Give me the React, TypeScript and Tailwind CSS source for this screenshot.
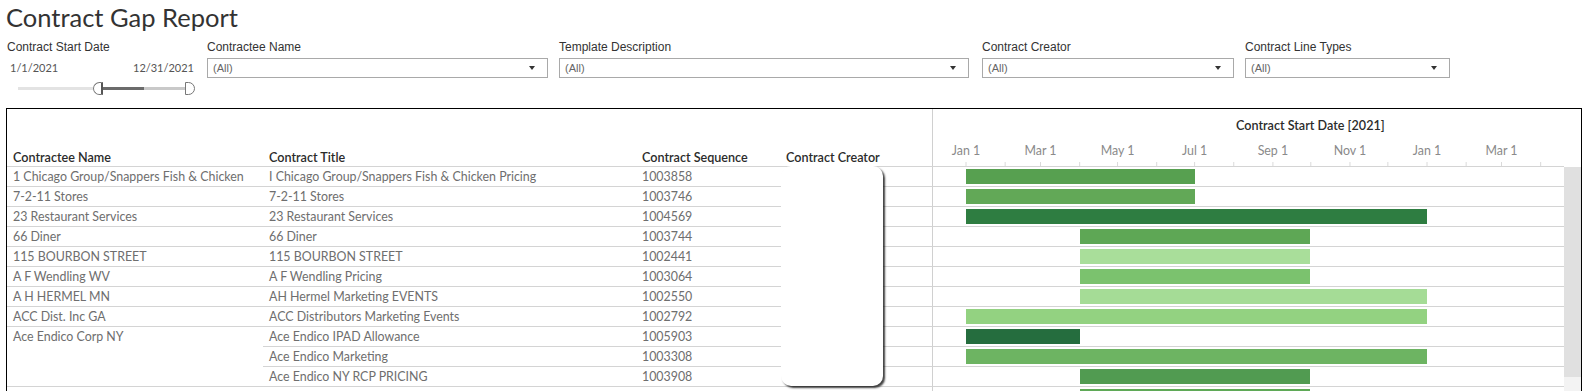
import React from "react";

// pixels per day on the gantt axis; Jan 1 2021 sits 33px in from the chart edge
const DAY = 461 / 365;
const JAN = 33;

type Row = {
  name: string;
  title: string;
  seq: string;
  from: number;
  to: number;
  color: string;
  merged?: boolean; // row continues the contractee cell of the row below
};

const rows: Row[] = [
  { name: "1 Chicago Group/Snappers Fish & Chicken", title: "I Chicago Group/Snappers Fish & Chicken Pricing", seq: "1003858", from: 0, to: 181, color: "#57a050" },
  { name: "7-2-11 Stores", title: "7-2-11 Stores", seq: "1003746", from: 0, to: 181, color: "#62a857" },
  { name: "23 Restaurant Services", title: "23 Restaurant Services", seq: "1004569", from: 0, to: 365, color: "#2e7d41" },
  { name: "66 Diner", title: "66 Diner", seq: "1003744", from: 90, to: 272, color: "#5ea755" },
  { name: "115 BOURBON STREET", title: "115 BOURBON STREET", seq: "1002441", from: 90, to: 272, color: "#a9de9a" },
  { name: "A F Wendling WV", title: "A F Wendling Pricing", seq: "1003064", from: 90, to: 272, color: "#7bc26e" },
  { name: "A H HERMEL MN", title: "AH Hermel Marketing EVENTS", seq: "1002550", from: 90, to: 365, color: "#a5dc96" },
  { name: "ACC Dist. Inc GA", title: "ACC Distributors Marketing Events", seq: "1002792", from: 0, to: 365, color: "#93d281" },
  { name: "Ace Endico Corp NY", title: "Ace Endico IPAD Allowance", seq: "1005903", from: 0, to: 90, color: "#256d3e", merged: true },
  { name: "", title: "Ace Endico Marketing", seq: "1003308", from: 0, to: 365, color: "#6db462", merged: true },
  { name: "", title: "Ace Endico NY RCP PRICING", seq: "1003908", from: 90, to: 272, color: "#519b51" },
  { name: "", title: "", seq: "", from: 90, to: 272, color: "#5fa957" },
];

const months = [0, 31, 59, 90, 120, 151, 181, 212, 243, 273, 304, 334, 365, 396, 424, 455];
const labels = [
  { d: 0, t: "Jan 1" },
  { d: 59, t: "Mar 1" },
  { d: 120, t: "May 1" },
  { d: 181, t: "Jul 1" },
  { d: 243, t: "Sep 1" },
  { d: 304, t: "Nov 1" },
  { d: 365, t: "Jan 1" },
  { d: 424, t: "Mar 1" },
];

function Filter({ label, className }: { label: string; className: string }) {
  return (
    <div className={className}>
      <div className="mt-[4px] text-[12px] leading-[14px] text-[#333]">{label}</div>
      <div className="mt-[4px] flex h-[20px] items-center justify-between border border-[#a9a9a9] pl-[5px] pr-[12px]">
        <span className="text-[11px] text-[#666]">(All)</span>
        <span className="h-0 w-0 border-x-[3.5px] border-t-[4px] border-x-transparent border-t-[#333]" />
      </div>
    </div>
  );
}

export default function App() {
  return (
    <div className="h-[391px] w-[1591px] overflow-hidden bg-white font-['Liberation_Sans',Arial,sans-serif]">
      {/* Title */}
      <div className="h-[36px] pl-[6px] pt-[2px] font-['Lato',sans-serif] text-[25.5px] leading-[30px] text-[#333]">
        Contract Gap Report
      </div>

      {/* Filters */}
      <div className="flex h-[72px] pl-[7px]">
        <div className="w-[200px]">
          <div className="mt-[4px] text-[12px] leading-[14px] text-[#333]">Contract Start Date</div>
          <div className="mt-[4px] flex h-[20px] items-center justify-between pl-[3px] pr-[13px] font-['Lato',sans-serif] text-[11px] text-[#555]">
            <span>1/1/2021</span>
            <span>12/31/2021</span>
          </div>
          <div className="mt-[4px] flex h-[13px] items-center pl-[11px]">
            <div className="h-[3px] w-[75px] bg-[#e3e3e3]" />
            <div className="h-[13px] w-[10px] rounded-l-full border border-r-2 border-[#777] border-r-[#555] bg-white" />
            <div className="h-[3px] w-[41px] bg-[#6b6b6b]" />
            <div className="h-[3px] w-[41px] bg-[#c9c9c9]" />
            <div className="h-[13px] w-[10px] rounded-r-full border border-[#777] bg-white" />
          </div>
        </div>
        <Filter label="Contractee Name" className="w-[341px]" />
        <Filter label="Template Description" className="ml-[11px] w-[410px]" />
        <Filter label="Contract Creator" className="ml-[13px] w-[252px]" />
        <Filter label="Contract Line Types" className="ml-[11px] w-[205px]" />
      </div>

      {/* Worksheet */}
      <div className="relative ml-[6px] flex w-[1576px] border border-black font-['Lato',sans-serif] text-[12.4px]">
        <div className="w-[1557px]">
          {/* header */}
          <div className="flex h-[58px] border-b border-[#d4d4d4] text-[12.6px] font-semibold text-[#2b2b2b]">
            <div className="flex w-[256px] items-end pl-[6px] leading-[16px]">Contractee Name</div>
            <div className="flex w-[373px] items-end pl-[6px] leading-[16px]">Contract Title</div>
            <div className="flex w-[144px] items-end pl-[6px] leading-[16px]">Contract Sequence</div>
            <div className="flex w-[152px] items-end pl-[6px] leading-[16px]">Contract Creator</div>
            <div className="relative w-[632px] border-l border-[#d0d0d0]">
              <div className="absolute left-[303px] top-[8px] whitespace-nowrap leading-[18px]">
                Contract Start Date [2021]
              </div>
              {labels.map((l, i) => (
                <div
                  key={i}
                  className="absolute top-[33px] -translate-x-1/2 whitespace-nowrap text-[12.4px] font-normal leading-[18px] text-[#8a8a8a]"
                  style={{ left: JAN + l.d * DAY }}
                >
                  {l.t}
                </div>
              ))}
              <svg className="absolute bottom-0 left-0" width="631" height="4">
                {months.map((d) => (
                  <line key={d} x1={JAN + d * DAY} x2={JAN + d * DAY} y1="0" y2="4" stroke="#dadada" strokeWidth="1" />
                ))}
              </svg>
            </div>
          </div>

          {/* rows */}
          {rows.map((r, i) => (
            <div key={i} className="flex h-[20px] leading-[19px] text-[#6e6e6e]">
              <div className={"w-[256px] whitespace-nowrap pl-[6px] " + (r.merged ? "" : "border-b border-[#d4d4d4]")}>
                {r.name}
              </div>
              <div className="flex border-b border-[#d4d4d4]">
                <div className="w-[373px] whitespace-nowrap pl-[6px]">{r.title}</div>
                <div className="w-[144px] pl-[6px]">{r.seq}</div>
                <div className="w-[152px]" />
              </div>
              <div className="relative w-[632px] border-b border-l border-[#d0d0d0] border-b-[#d4d4d4]">
                <div
                  className="absolute top-[2px] h-[15px]"
                  style={{ left: JAN + r.from * DAY, width: (r.to - r.from) * DAY, background: r.color }}
                />
              </div>
            </div>
          ))}
        </div>

        {/* scrollbar */}
        <div className="flex w-[17px] flex-col">
          <div className="h-[58px] bg-white" />
          <div className="h-[210px] bg-[#e0e0e0]" />
          <div className="flex-1 bg-[#f3f3f3]" />
        </div>

        {/* redacted creator names */}
        <div className="absolute left-[774px] top-[57px] h-[220px] w-[102px] rounded-[10px] bg-white shadow-[2px_2px_2px_rgba(0,0,0,0.75)]" />
      </div>
    </div>
  );
}
